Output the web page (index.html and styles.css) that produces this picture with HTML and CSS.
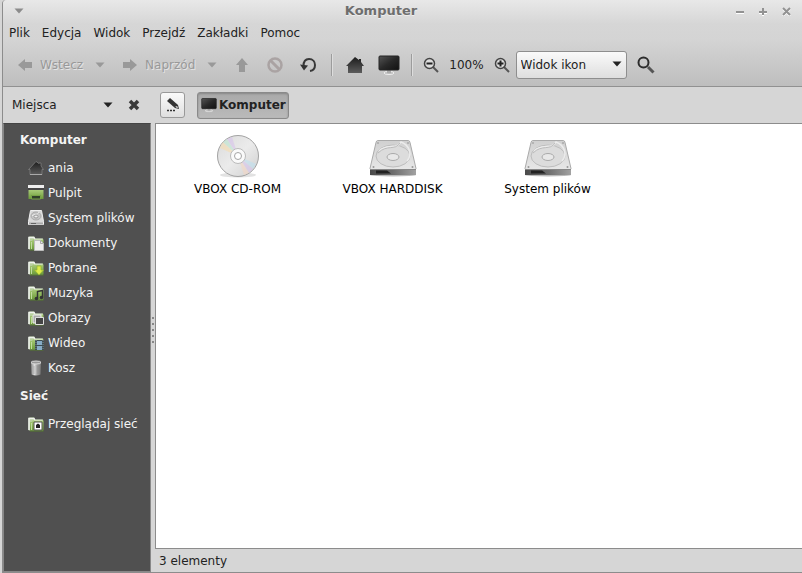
FILE: index.html
```html
<!DOCTYPE html>
<html lang="pl">
<head>
<meta charset="utf-8">
<title>Komputer</title>
<link rel="stylesheet" href="styles.css">
</head>
<body>
<svg class="defs" aria-hidden="true">
  <defs>
    <linearGradient id="dark" x1="0" y1="0" x2="0" y2="1"><stop offset="0" stop-color="#1c1c1c"/><stop offset="1" stop-color="#5c5c5c"/></linearGradient>
    <linearGradient id="screen" x1="0" y1="0" x2="1" y2="1"><stop offset="0" stop-color="#555"/><stop offset=".5" stop-color="#292929"/><stop offset="1" stop-color="#111"/></linearGradient>
    <linearGradient id="green" x1="0" y1="0" x2="0" y2="1"><stop offset="0" stop-color="#a9cb79"/><stop offset="1" stop-color="#6c9b38"/></linearGradient>
    <linearGradient id="metal" x1="0" y1="0" x2="0" y2="1"><stop offset="0" stop-color="#d0d0d0"/><stop offset="1" stop-color="#e8e8e8"/></linearGradient>
    <linearGradient id="front" x1="0" y1="0" x2="1" y2="0"><stop offset="0" stop-color="#4a4a4a"/><stop offset=".5" stop-color="#6c6c6c"/><stop offset="1" stop-color="#a2a2a2"/></linearGradient>
    <linearGradient id="can" x1="0" y1="0" x2="1" y2="0"><stop offset="0" stop-color="#878787"/><stop offset=".35" stop-color="#ddd"/><stop offset=".6" stop-color="#a0a0a0"/><stop offset="1" stop-color="#777"/></linearGradient>
    <linearGradient id="disc" x1="0" y1="0" x2="1" y2="1"><stop offset="0" stop-color="#dadada"/><stop offset=".5" stop-color="#ebebeb"/><stop offset="1" stop-color="#cfcfcf"/></linearGradient>
    <symbol id="i-caret" viewBox="0 0 10 6"><path d="M0.500 .5h9L5 5.500z" fill="currentColor"/></symbol>
    <symbol id="i-left" viewBox="0 0 16 16"><path d="M1 8l7-6v3h7v6H8v3z" fill="currentColor"/></symbol>
    <symbol id="i-up" viewBox="0 0 16 16"><path d="M8 1l6 7h-3v7H5V8H2z" fill="currentColor"/></symbol>
    <symbol id="i-home" viewBox="0 0 18 18"><path d="M9 1l4 3V3h2v3l3 4h-2v7H2v-7H0z" fill="url(#dark)"/></symbol>
    <symbol id="i-monitor" viewBox="0 0 22 20"><ellipse cx="11" cy="18" rx="5" ry="1.500" fill="#bbb" stroke="#eee"/><path d="M9 15h4v3H9z" fill="#aaa"/><rect x="1" y="1" width="20" height="14" rx="1" fill="url(#screen)" stroke="#242424"/></symbol>
    <symbol id="i-folder" viewBox="0 0 16 16"><path d="M.5 14V2.500l1-1H6l1 2h8v11H1z" fill="#b9cfa0"/><path d="M1 14V2.500h5l1 2h7.500" fill="none" stroke="#f0f2ee" stroke-width="1.500"/><path d="M2 14.500V6h2l1-1.500h10.500v10z" fill="url(#green)"/><path d="M2 15h13.500" stroke="#547a2c"/><path d="M3.500 7v7" stroke="#c0dba0"/></symbol>
    <symbol id="i-drive" viewBox="0 0 48 38">
      <ellipse cx="24" cy="36" rx="23" ry="1.500" fill="#bbb"/>
      <path d="M8.500 1.500h31q1 0 1.500 2l6 26-1 2H2l-1-2 6-26q.5-2 1.500-2z" fill="url(#metal)" stroke="#aaa"/>
      <ellipse cx="24" cy="17" rx="17" ry="11" fill="#dcdcdc" stroke="#bdbdbd"/>
      <path d="M10 12C18 4 28 11 32 3c8 3 12 12 6 19" fill="none" stroke="#ececec" stroke-width="1.500"/>
      <path d="M9 14C18 5 26 12 31 4" fill="none" stroke="#bbb"/>
      <ellipse cx="24" cy="18" rx="6" ry="3.500" fill="#e8e8e8" stroke="#aaa"/>
      <circle cx="9" cy="4" r="1" fill="#aaa"/><circle cx="39" cy="4" r="1" fill="#aaa"/><circle cx="4.500" cy="28" r="1" fill="#999"/><circle cx="43.500" cy="28" r="1" fill="#999"/>
      <path d="M1 30h46v6H1z" fill="url(#front)"/><path d="M7 31.500h11l4 3H7z" fill="#222"/><path d="M1 30.500h46" stroke="#888"/>
    </symbol>
  </defs>
</svg>

<div class="window">
  <header class="head">
    <div class="titlebar">
      <button class="plain" aria-label="Menu okna"><svg class="caret" aria-hidden="true"><use href="#i-caret"/></svg></button>
      <h1>Komputer</h1>
      <div class="winbtns">
        <button class="plain" aria-label="Minimalizuj"><svg width="9" height="9" viewBox="0 0 9 9"><path d="M0 6h8" stroke="#fff" stroke-width="2"/><path d="M0 5h8" stroke="#929292" stroke-width="2"/></svg></button>
        <button class="plain" aria-label="Maksymalizuj"><svg width="9" height="9" viewBox="0 0 9 9"><path d="M0 6h8M4 1v8" stroke="#fff" stroke-width="2"/><path d="M0 5h8M4 1v7" stroke="#929292" stroke-width="2"/></svg></button>
        <button class="plain" aria-label="Zamknij"><svg width="9" height="9" viewBox="0 0 9 9"><path d="M1 2l7 7M8 2L1 9" stroke="#fff" stroke-width="2"/><path d="M1 1l7 7M8 1L1 8" stroke="#929292" stroke-width="2"/></svg></button>
      </div>
    </div>
    <nav class="menubar">
      <button class="plain">Plik</button><button class="plain">Edycja</button><button class="plain">Widok</button><button class="plain">Przejdź</button><button class="plain">Zakładki</button><button class="plain">Pomoc</button>
    </nav>
    <div class="toolbar">
      <div class="group nav">
        <div class="split">
          <button class="plain labelled" disabled><svg class="s16" aria-hidden="true"><use href="#i-left"/></svg>Wstecz</button>
          <button class="plain" disabled aria-label="Historia wstecz"><svg class="caret"><use href="#i-caret"/></svg></button>
        </div>
        <div class="split">
          <button class="plain labelled" disabled><svg class="s16 flip" aria-hidden="true"><use href="#i-left"/></svg>Naprzód</button>
          <button class="plain" disabled aria-label="Historia naprzód"><svg class="caret"><use href="#i-caret"/></svg></button>
        </div>
        <button class="plain" disabled aria-label="W górę"><svg class="s16"><use href="#i-up"/></svg></button>
        <button class="plain" disabled aria-label="Zatrzymaj"><svg class="s16" viewBox="0 0 16 16"><path d="M3.500 3.500l9 9" stroke="#aaa3a3" stroke-width="3"/><circle cx="8" cy="8" r="6.500" fill="none" stroke="#aaa3a3" stroke-width="2.500"/></svg></button>
        <button class="plain" aria-label="Odśwież"><svg class="s16" viewBox="0 0 16 16"><path d="M3.500 9C3.500 4 6 2 9 2c4 0 6 3 6 6 0 3-2 5.500-5 6" fill="none" stroke="#383838" stroke-width="2"/><path d="M0 7.500l8 1-4 5z" fill="#333"/></svg></button>
      </div>
      <div class="group places">
        <button class="plain" aria-label="Katalog domowy"><svg width="18" height="18"><use href="#i-home"/></svg></button>
        <button class="plain" aria-label="Komputer"><svg width="22" height="20"><use href="#i-monitor"/></svg></button>
      </div>
      <div class="group zoom">
        <button class="plain" aria-label="Pomniejsz"><svg class="s16" viewBox="0 0 16 16"><path d="M10 10l5 5" stroke="#555" stroke-width="2"/><circle cx="6.500" cy="6.500" r="5" fill="#ddd" stroke="#444" stroke-width="1.500"/><path d="M3.500 6.500h6" stroke="#222" stroke-width="2"/></svg></button>
        <span>100%</span>
        <button class="plain" aria-label="Powiększ"><svg class="s16" viewBox="0 0 16 16"><path d="M10 10l5 5" stroke="#555" stroke-width="2"/><circle cx="6.500" cy="6.500" r="5" fill="#ddd" stroke="#444" stroke-width="1.500"/><path d="M3.500 6.500h6M6.500 3.500v6" stroke="#222" stroke-width="2"/></svg></button>
      </div>
      <div class="combo">
        <select aria-label="Widok"><option>Widok ikon</option><option>Widok listy</option></select>
        <svg class="caret" aria-hidden="true"><use href="#i-caret"/></svg>
      </div>
      <button class="plain" aria-label="Szukaj"><svg width="18" height="18" viewBox="0 0 18 18"><path d="M11 11l5.500 5.500" stroke="#555" stroke-width="3"/><circle cx="6.500" cy="6.500" r="5" fill="none" stroke="#2c2c2c" stroke-width="2"/></svg></button>
    </div>
  </header>

  <div class="body">
    <div class="side">
      <div class="sidehead">
        <button class="plain chooser">Miejsca<svg class="caret" aria-hidden="true"><use href="#i-caret"/></svg></button>
        <button class="plain" aria-label="Zamknij panel"><svg width="12" height="12" viewBox="0 0 12 12"><path d="M2 2l8 8M10 2l-8 8" stroke="#3a3a3a" stroke-width="3.500"/></svg></button>
      </div>
      <nav class="tree">
        <h2>Komputer</h2>
        <ul>
          <li><a href="#"><svg class="s16" viewBox="0 0 16 16"><path d="M8 1.500l3 2V3h2v3l2.500 3.500H14v5H2v-5H.5z" fill="url(#dark)" stroke="#858585" stroke-width=".7"/><path d="M2 14.500h12" stroke="#aaa"/></svg>ania</a></li>
          <li><a href="#"><svg class="s16" viewBox="0 0 16 16"><path d="M0 0h16v3H0z" fill="#eee"/><path d="M0 3h16v2H0z" fill="#454545"/><path d="M.5 5h15v9H.5z" fill="url(#green)"/><path d="M3.500 10.500h9V14h-9z" fill="#31402a" stroke="#78a247"/></svg>Pulpit</a></li>
          <li><a href="#"><svg class="s16" viewBox="0 0 16 16"><path d="M2.500.5h11l2 11v3H.5v-3z" fill="#d8d8d8" stroke="#efefef"/><ellipse cx="8" cy="6" rx="5" ry="4" fill="#c5c5c5" stroke="#aaa"/><path d="M4 6c3-3 5 0 7-4" fill="none" stroke="#eee"/><ellipse cx="8" cy="6.500" rx="2" ry="1.500" fill="#eee" stroke="#999"/><path d="M1 12.500h14v2H1z" fill="#aaa"/><path d="M3 13.500h5" stroke="#666"/></svg>System plików</a></li>
          <li><a href="#"><svg class="s16" viewBox="0 0 16 16"><use href="#i-folder"/><path d="M6.500 5.500h6l3 3v7h-9z" fill="#ededed" stroke="#bcbcbc"/><path d="M12.500 5.500v3h3" fill="none" stroke="#aaa"/></svg>Dokumenty</a></li>
          <li><a href="#"><svg class="s16" viewBox="0 0 16 16"><use href="#i-folder"/><path d="M9 6h4v4h2.500L11 15l-4.500-5H9z" fill="#dcec4a" stroke="#98b42c" stroke-width=".7"/></svg>Pobrane</a></li>
          <li><a href="#"><svg class="s16" viewBox="0 0 16 16"><use href="#i-folder"/><path d="M9.500 13V6.500l5-1V12" fill="none" stroke="#343434" stroke-width="1.500"/><circle cx="8.500" cy="13.500" r="1.800" fill="#343434"/><circle cx="13.500" cy="12.500" r="1.800" fill="#343434"/></svg>Muzyka</a></li>
          <li><a href="#"><svg class="s16" viewBox="0 0 16 16"><use href="#i-folder"/><path d="M5 5h8v8H5z" fill="#aaa" stroke="#eee"/><path d="M7.500 7.500h8v7h-8z" fill="#444" stroke="#ddd"/></svg>Obrazy</a></li>
          <li><a href="#"><svg class="s16" viewBox="0 0 16 16"><use href="#i-folder"/><path d="M7 5h9v10H7z" fill="#3c4c52"/><path d="M9 6h5v4H9zM9 11h5v4H9z" fill="#86abc6"/><path d="M8 5v10M15 5v10" stroke="#819094" stroke-dasharray="1 1"/></svg>Wideo</a></li>
          <li><a href="#"><svg class="s16" viewBox="0 0 16 16"><path d="M3 2.500l.5 12q4.500 2 9 0l.5-12z" fill="url(#can)"/><ellipse cx="8" cy="2.500" rx="5" ry="1.500" fill="#999" stroke="#ddd"/><path d="M6 6v8M10 6v8" stroke="#888" stroke-width=".5"/></svg>Kosz</a></li>
        </ul>
        <h2>Sieć</h2>
        <ul>
          <li><a href="#"><svg class="s16" viewBox="0 0 16 16"><use href="#i-folder"/><path d="M6 6h8v8H6z" fill="#fff" stroke="#555"/><path d="M8 9l2-1.500L12 9v3H8z" fill="#222"/></svg>Przeglądaj sieć</a></li>
        </ul>
      </nav>
    </div>
    <div class="grip" aria-hidden="true"><i></i><i></i><i></i><i></i><i></i></div>
    <div class="content">
      <div class="pathbar">
        <button class="edit" aria-label="Edytuj ścieżkę"><svg class="s16" viewBox="0 0 16 16"><path d="M2 4l3-3 8 7 1 4-4-1z" fill="#333"/><path d="M10.500 9l2 .5.5 1.500-2-.5z" fill="#ddd"/><path d="M2 13.500h8" stroke="#333" stroke-width="1.500" stroke-dasharray="2 1"/></svg></button>
        <button class="crumb"><svg class="s16" viewBox="0 0 22 20" aria-hidden="true"><use href="#i-monitor"/></svg>Komputer</button>
      </div>
      <main class="files">
        <a href="#"><svg width="48" height="44" viewBox="0 0 48 44"><ellipse cx="24" cy="41" rx="18" ry="2.500" fill="#e2e2e2"/><circle cx="24" cy="22" r="20.500" fill="url(#disc)" stroke="#a3a3a3"/><g opacity=".6"><path d="M24 22L6 14a20 20 0 0 1 3-6z" fill="#f6ddb0"/><path d="M24 22L9 8l4-3z" fill="#bfe8d1"/><path d="M24 22L13 5l5-2z" fill="#d8c4ec"/><path d="M24 22l18 8-3 5z" fill="#bfe0f0"/><path d="M24 22l15 13-4 4z" fill="#d7c4ec"/><path d="M24 22l11 17-5 2z" fill="#f4d7c5"/></g><circle cx="24" cy="22" r="7.500" fill="#fafafa" stroke="#bbb"/><circle cx="24" cy="22" r="3.500" fill="#fff" stroke="#a5a5a5"/></svg>VBOX CD-ROM</a>
        <a href="#"><svg width="48" height="44" viewBox="0 -5 48 44"><use href="#i-drive" width="48" height="38"/></svg>VBOX HARDDISK</a>
        <a href="#"><svg width="48" height="44" viewBox="0 -5 48 44"><use href="#i-drive" width="48" height="38"/></svg>System plików</a>
      </main>
      <footer class="status">3 elementy</footer>
    </div>
  </div>
</div>
</body>
</html>
```
FILE: styles.css
```css
* { box-sizing: border-box; }
body {
  margin: 0;
  background: #d6d6d6;
  color: #222;
  font: 12px/16px "DejaVu Sans", sans-serif;
}
svg { display: block; flex: none; }
.defs { position: absolute; width: 0; height: 0; }
.s16 { width: 16px; height: 16px; }
.caret { width: 10px; height: 6px; }
.flip { transform: scaleX(-1); }
button, select { font: inherit; color: inherit; }
.plain { display: flex; align-items: center; padding: 0; border: 0; background: none; }
.plain:disabled { color: #999; text-shadow: 1px 1px 0 #e4e4e4; }

.window {
  display: flex;
  flex-direction: column;
  min-height: 100vh;
  margin-left: 2px;
  border-left: 1px solid #8c8c8c;
  border-bottom: 1px solid #8c8c8c;
  border-top-left-radius: 4px;
}
.head {
  background: linear-gradient(#e8e8e8 0, #d6d6d6 24px, #d4d4d4 40px, #bebebe 100%);
  border-bottom: 1px solid #919191;
  border-top-left-radius: 4px;
}
.titlebar {
  display: grid;
  grid-template-columns: 12px 1fr 66px;
  align-items: center;
  height: 22px;
  padding-left: 11px;
  color: #8b8b8b;
}
h1 { margin: 0; font-size: 13px; line-height: 22px; text-align: center; color: #6e6e6e; text-shadow: 0 1px 0 #eee; }
.winbtns { display: flex; gap: 14px; }
.menubar { display: flex; gap: 12px; height: 22px; padding-left: 6px; }
.toolbar { display: flex; align-items: center; height: 42px; padding-left: 14px; }
.group { display: flex; align-items: center; }
.nav { gap: 17px; padding-right: 15px; }
.split { display: flex; align-items: center; gap: 12px; }
.labelled { gap: 7px; }
.places { gap: 14px; padding: 0 11px 0 14px; }
.zoom { gap: 10px; padding: 0 6px 0 11px; }
.places, .zoom { height: 22px; border-left: 1px solid #9c9c9c; box-shadow: inset 1px 0 0 #ddd; }
.combo { position: relative; margin-right: 10px; color: #222; }
.combo select {
  appearance: none;
  width: 111px;
  height: 28px;
  padding: 0 24px 0 4px;
  border: 1px solid #8e8e8e;
  border-radius: 3px;
  background: linear-gradient(#fafafa, #dedede);
}
.combo .caret { position: absolute; right: 5px; top: 10px; pointer-events: none; }

.body { display: flex; flex: 1; }
.side { display: flex; flex-direction: column; width: 148px; }
.sidehead { display: flex; align-items: center; justify-content: space-between; height: 36px; padding: 0 11px 0 9px; }
.chooser { justify-content: space-between; width: 101px; }
.tree { flex: 1; padding: 8px 0 0 16px; background: #505050; border: 1px solid #888; border-top-color: #444; color: #f4f4f4; }
.tree h2 { margin: 0; font-size: 12px; line-height: 16px; }
.tree ul { margin: 0; padding: 7px 0 8px 8px; list-style: none; }
.tree a { display: flex; align-items: center; gap: 4px; height: 25px; color: inherit; text-decoration: none; white-space: nowrap; }
.grip { display: flex; flex-direction: column; align-items: center; justify-content: center; gap: 4px; width: 4px; }
.grip i { width: 2px; height: 2px; background: #888; }

.content { display: flex; flex: 1; flex-direction: column; min-width: 0; }
.pathbar { display: flex; align-items: center; gap: 12px; height: 36px; padding-left: 5px; }
.edit, .crumb { display: flex; align-items: center; border: 1px solid #8a8a8a; border-radius: 3px; }
.edit { width: 25px; height: 26px; padding: 0 4px; border-color: #999; background: linear-gradient(#fafafa, #dfdfdf); }
.crumb { gap: 2px; height: 27px; padding: 0 2px 0 3px; background: linear-gradient(#a9a9a9, #bababa); box-shadow: inset 0 1px 2px #888; font-weight: bold; }
.files { display: flex; flex: 1; align-items: flex-start; padding: 10px 0 0 4px; background: #fff; border: solid #8c8c8c; border-width: 1px 0 1px 1px; }
.files a { display: flex; flex-direction: column; align-items: center; gap: 3px; width: 155px; color: #000; text-decoration: none; }
.status { height: 23px; padding: 4px; line-height: 16px; }
```
